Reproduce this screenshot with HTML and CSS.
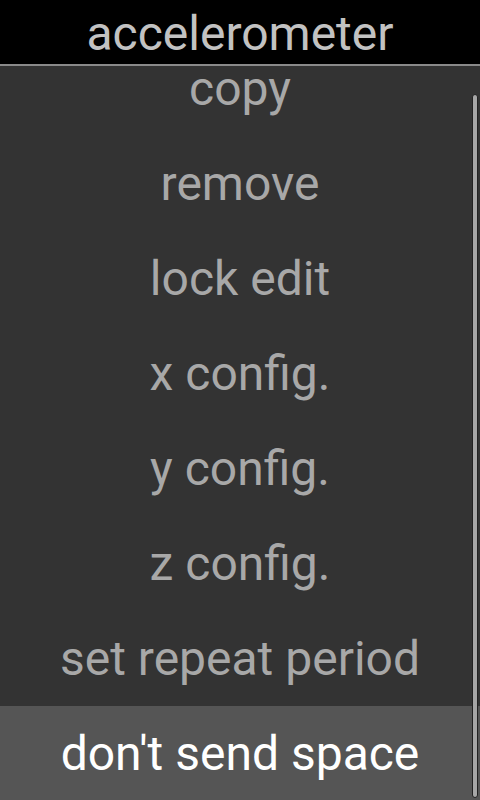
FILE: index.html
```html
<!DOCTYPE html>
<html lang="en">

<head>
    <meta charset="UTF-8">
    <meta name="viewport" content="width=device-width, initial-scale=1.0">
    <title>accelerometer</title>
    <link rel="stylesheet" href="styles.css">
</head>

<body>
    <div class="dialog">
        <div class="title">accelerometer</div>
        <div class="list">
            <div class="items">
                <div class="item">copy</div>
                <div class="item">remove</div>
                <div class="item">lock edit</div>
                <div class="item">x config.</div>
                <div class="item">y config.</div>
                <div class="item">z config.</div>
                <div class="item">set repeat period</div>
                <div class="item selected">don't send space</div>
            </div>
            <div class="scrollbar"></div>
        </div>
    </div>
</body>

</html>
```

FILE: styles.css
```css
* {
    margin: 0;
    padding: 0;
    box-sizing: border-box;
}

body {
    background: #000;
    font-family: Roboto, 'Noto Sans', sans-serif;
    width: 480px;
    height: 800px;
    overflow: hidden;
}

.dialog {
    display: flex;
    flex-direction: column;
    height: 800px;
}

.title {
    height: 66px;
    background: #000;
    color: #c2c2c2;
    font-size: 48px;
    text-align: center;
    line-height: 68px;
    border-bottom: 2px solid #8a8a8a;
}

.list {
    flex: 1;
    background: #333;
    position: relative;
    overflow: hidden;
}

.items {
    margin-top: -25px;
}

.item {
    height: 95px;
    display: flex;
    justify-content: center;
    align-items: center;
    font-size: 48px;
    color: #a8a8a8;
}

.item.selected {
    background: #555;
    color: #fff;
}

.scrollbar {
    position: absolute;
    right: 2px;
    top: 28px;
    bottom: 2px;
    width: 6px;
    background: #a6a6a6;
    border: 1px solid #222;
    border-radius: 3px;
}
```
